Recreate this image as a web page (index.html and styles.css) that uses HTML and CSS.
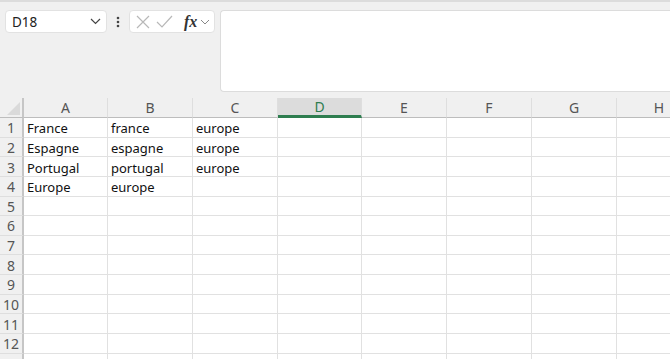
FILE: index.html
```html
<!DOCTYPE html>
<html lang="fr">
<head>
    <meta charset="UTF-8">
    <title>Classeur</title>
<link rel="stylesheet" href="styles.css">
</head>
<body>
  <div class="toolbar">
    <div class="namebox">
      <span>D18</span>
      <svg width="11" height="7" viewBox="0 0 11 7"><polyline points="1,1 5.5,5.5 10,1" fill="none" stroke="#444" stroke-width="1.2"/></svg>
    </div>
    <svg class="dots" width="4" height="12" viewBox="0 0 4 12"><circle cx="2" cy="2" r="1.3" fill="#444"/><circle cx="2" cy="6" r="1.3" fill="#444"/><circle cx="2" cy="10" r="1.3" fill="#444"/></svg>
    <div class="fbuttons">
      <svg width="14" height="14" viewBox="0 0 14 14"><path d="M1 1 L13 13 M13 1 L1 13" stroke="#b8b8b8" stroke-width="1.2"/></svg>
      <svg width="17" height="13" viewBox="0 0 17 13"><polyline points="1,7 6,12 16,1" fill="none" stroke="#b8b8b8" stroke-width="1.2"/></svg>
      <span class="fx">fx</span>
      <svg width="10" height="6" viewBox="0 0 10 6"><polyline points="1,1 5,5 9,1" fill="none" stroke="#888" stroke-width="1"/></svg>
    </div>
    <div class="formula"></div>
  </div>

  <div class="sheet">
    <div class="corner"></div><div class="colhead">A</div><div class="colhead">B</div><div class="colhead">C</div><div class="colhead active">D</div><div class="colhead">E</div><div class="colhead">F</div><div class="colhead">G</div><div class="colhead">H</div>

    <div class="rowhead">1</div><div class="cell">France</div><div class="cell">france</div><div class="cell">europe</div><div class="cell"></div><div class="cell"></div><div class="cell"></div><div class="cell"></div><div class="cell"></div>
    <div class="rowhead">2</div><div class="cell">Espagne</div><div class="cell">espagne</div><div class="cell">europe</div><div class="cell"></div><div class="cell"></div><div class="cell"></div><div class="cell"></div><div class="cell"></div>
    <div class="rowhead">3</div><div class="cell">Portugal</div><div class="cell">portugal</div><div class="cell">europe</div><div class="cell"></div><div class="cell"></div><div class="cell"></div><div class="cell"></div><div class="cell"></div>
    <div class="rowhead">4</div><div class="cell">Europe</div><div class="cell">europe</div><div class="cell"></div><div class="cell"></div><div class="cell"></div><div class="cell"></div><div class="cell"></div><div class="cell"></div>
    <div class="rowhead">5</div><div class="cell"></div><div class="cell"></div><div class="cell"></div><div class="cell"></div><div class="cell"></div><div class="cell"></div><div class="cell"></div><div class="cell"></div>
    <div class="rowhead">6</div><div class="cell"></div><div class="cell"></div><div class="cell"></div><div class="cell"></div><div class="cell"></div><div class="cell"></div><div class="cell"></div><div class="cell"></div>
    <div class="rowhead">7</div><div class="cell"></div><div class="cell"></div><div class="cell"></div><div class="cell"></div><div class="cell"></div><div class="cell"></div><div class="cell"></div><div class="cell"></div>
    <div class="rowhead">8</div><div class="cell"></div><div class="cell"></div><div class="cell"></div><div class="cell"></div><div class="cell"></div><div class="cell"></div><div class="cell"></div><div class="cell"></div>
    <div class="rowhead">9</div><div class="cell"></div><div class="cell"></div><div class="cell"></div><div class="cell"></div><div class="cell"></div><div class="cell"></div><div class="cell"></div><div class="cell"></div>
    <div class="rowhead">10</div><div class="cell"></div><div class="cell"></div><div class="cell"></div><div class="cell"></div><div class="cell"></div><div class="cell"></div><div class="cell"></div><div class="cell"></div>
    <div class="rowhead">11</div><div class="cell"></div><div class="cell"></div><div class="cell"></div><div class="cell"></div><div class="cell"></div><div class="cell"></div><div class="cell"></div><div class="cell"></div>
    <div class="rowhead">12</div><div class="cell"></div><div class="cell"></div><div class="cell"></div><div class="cell"></div><div class="cell"></div><div class="cell"></div><div class="cell"></div><div class="cell"></div>
    <div class="rowhead">13</div><div class="cell"></div><div class="cell"></div><div class="cell"></div><div class="cell"></div><div class="cell"></div><div class="cell"></div><div class="cell"></div><div class="cell"></div>
  </div>
</body>
</html>
```

FILE: styles.css
```css
html, body {
  margin: 0;
  height: 100%;
  overflow: hidden;
  background: #fff;
  font-family: "Noto Sans", sans-serif;
}
.toolbar {
  display: flex;
  align-items: flex-start;
  background: #f0f0f0;
  border-top: 2px solid #dcdcdc;
  padding: 8px 0 6px 5px;
  box-sizing: border-box;
  height: 98px;
}
.namebox {
  display: flex;
  align-items: center;
  justify-content: space-between;
  width: 102px;
  height: 23px;
  box-sizing: border-box;
  padding: 0 5px 0 6px;
  background: #fff;
  border: 1px solid #e2e2e2;
  border-radius: 4px;
  font-size: 13.5px;
  color: #222;
}
.dots {
  margin: 6px 9px 0 9px;
}
.fbuttons {
  display: flex;
  align-items: center;
  gap: 6px;
  width: 86px;
  height: 23px;
  box-sizing: border-box;
  padding: 0 3px 0 6px;
  background: #fff;
  border: 1px solid #e2e2e2;
  border-radius: 4px;
}
.fx {
  font-family: "Liberation Serif", serif;
  font-style: italic;
  font-weight: bold;
  font-size: 16px;
  color: #333;
  margin-left: 5px;
  margin-right: -3px;
}
.formula {
  flex: 1;
  height: 82px;
  box-sizing: border-box;
  margin-left: 5px;
  background: #fff;
  border: 1px solid #dcdcdc;
  border-right: none;
  border-radius: 4px 0 0 4px;
}
.sheet {
  display: grid;
  grid-template-columns: 24px 84px 85px 85px 84px 85px 85px 85px 85px;
  grid-template-rows: 20px;
  grid-auto-rows: 19.64px;
  background: #fff;
}
.corner {
  position: relative;
  background: #f0f0f0;
  border-right: 2px solid #c6c6c6;
  border-bottom: 1px solid #bdbdbd;
  box-sizing: border-box;
}
.corner::after {
  content: "";
  position: absolute;
  right: 2px;
  bottom: 2px;
  border-left: 13px solid transparent;
  border-bottom: 13px solid #dadada;
}
.colhead {
  display: flex;
  align-items: center;
  justify-content: center;
  background: #f0f0f0;
  border-right: 1px solid #dedede;
  border-bottom: 1px solid #bdbdbd;
  box-sizing: border-box;
  font-size: 14px;
  color: #555;
}
.colhead.active {
  background: #dcdcdc;
  color: #2e7d4f;
  border-bottom: 3px solid #2e7d4f;
}
.rowhead {
  display: flex;
  align-items: center;
  justify-content: center;
  padding-top: 1px;
  background: #f0f0f0;
  border-right: 2px solid #c6c6c6;
  border-bottom: 1px solid #dedede;
  box-sizing: border-box;
  font-size: 14px;
  color: #555;
}
.cell {
  display: flex;
  align-items: center;
  padding: 2px 3px 0;
  border-right: 1px solid #e1e1e1;
  border-bottom: 1px solid #e1e1e1;
  box-sizing: border-box;
  font-size: 13px;
  color: #111;
  white-space: nowrap;
  overflow: hidden;
}
```
